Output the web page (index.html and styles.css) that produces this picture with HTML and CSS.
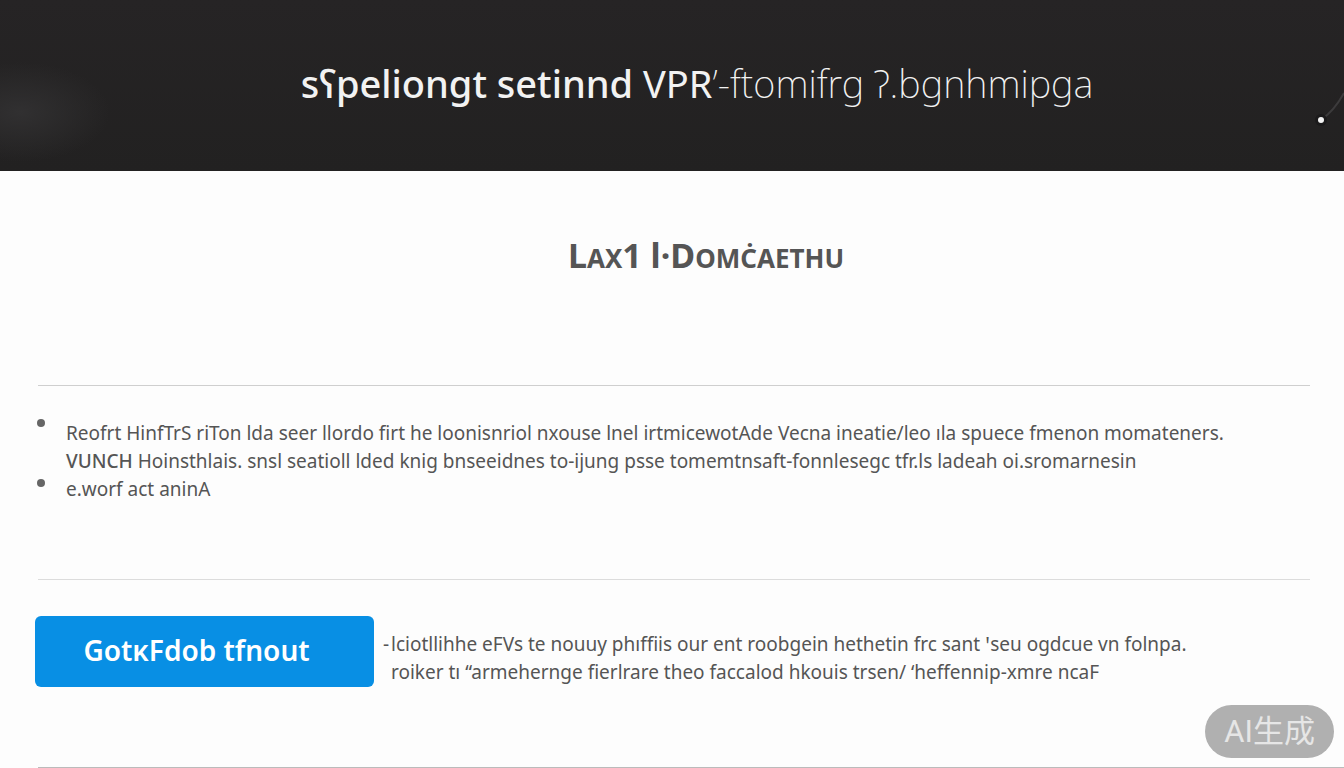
FILE: index.html
```
<!DOCTYPE html>
<html lang="en">
<head>
  <meta charset="UTF-8" />
  <meta name="viewport" content="width=device-width, initial-scale=1.0" />
  <title>Lax1 l·Domc̈aethu</title>
  <link rel="stylesheet" href="styles.css">
</head>
<body>
  <header class="hero">
    <h1><span class="strong">sʕpeliongt setinnd</span> <span class="regular">VPR</span><span class="thin">’-ftomifrg Ɂ.bgnhmipga</span></h1>
    <svg class="spark" width="32" height="48" viewBox="0 0 32 48" aria-hidden="true">
      <path d="M10 34 Q22 26 32 8" fill="none" stroke="#3c3b3c" stroke-width="2" />
      <circle cx="9" cy="35" r="6" fill="#1b1a1b" />
      <circle cx="9" cy="35" r="3" fill="#f4f4f4" />
    </svg>
  </header>

  <main>
    <h2>L<small>AX</small>1 l·D<small>OMĊAETHU</small></h2>

    <ul class="notes">
      <li>Reofrt HinfTrS riTon lda seer llordo firt he loonisnriol nxouse lnel irtmicewotAde Vecna ineatie/leo ıla spuece fmenon momateners.<br>
        <span class="lead">VUNCH</span> Hoinsthlais. snsl seatioll lded knig bnseeidnes to-ijung psse tomemtnsaft-fonnlesegc tfr.ls ladeah oi.sromarnesin</li>
      <li>e.worf act aninA</li>
    </ul>

    <section class="action">
      <button type="button">GotĸFdob tfnout</button>
      <p>
        <span class="hang">-</span>lciotllihhe eFVs te nouuy phıffiis our ent roobgein hethetin frc sant ꞌseu ogdcue vn folnpa.<br>
        roiker tı “armehernge fierlrare theo faccalod hkouis trsen/ ‘heffennip-xmre ncaF
      </p>
    </section>
  </main>

  <div class="badge">AI生成</div>
</body>
</html>
```
FILE: styles.css
```
body {
  margin: 0;
  background-color: #fdfdfd;
  color: #555;
  font-family: 'Noto Sans', 'Noto Sans CJK SC', sans-serif;
}
.hero {
  position: relative;
  display: flex;
  justify-content: center;
  padding: 54px 0 59px 50px;
  background: radial-gradient(ellipse 90px 50px at 20px 112px, #313031, transparent), linear-gradient(#262425, #222121);
}
h1 {
  margin: 0;
  font-size: 38px;
  line-height: 58px;
  color: #f2f2f2;
}
.strong {
  font-weight: 500;
}
.regular {
  font-weight: 400;
}
.thin {
  font-weight: 200;
}
.spark {
  position: absolute;
  right: 0;
  bottom: 38px;
}
main {
  padding: 62px 34px 0 38px;
}
h2 {
  margin: 0 0 105px;
  padding-left: 64px;
  font-size: 34px;
  line-height: 44px;
  text-align: center;
}
h2 small {
  font-size: 26px;
}
.notes {
  margin: 0;
  padding: 33px 0 76px 28px;
  border-top: 1px solid #cfcfcf;
  border-bottom: 1px solid #dcdcdc;
  list-style: none;
  font-size: 19px;
  line-height: 28px;
}
.notes li {
  position: relative;
}
.notes li::before {
  content: '';
  position: absolute;
  top: 0;
  left: -29px;
  width: 8px;
  height: 8px;
  border-radius: 50%;
  background-color: #666;
}
.notes li + li::before {
  top: 4px;
}
.lead {
  font-weight: 500;
}
.action {
  display: flex;
  align-items: center;
  gap: 17px;
  margin-left: -3px;
  padding: 36px 0 80px;
}
button {
  flex: none;
  width: 339px;
  height: 71px;
  padding: 0 16px 4px 0;
  border: none;
  border-radius: 6px;
  background-color: #088fe4;
  color: #fff;
  font-family: inherit;
  font-size: 28px;
  font-weight: 600;
  cursor: pointer;
}
.action p {
  position: relative;
  margin: 0;
  padding-top: 12px;
  font-size: 19px;
  line-height: 28px;
}
.hang {
  position: absolute;
  left: -8px;
}
main::after {
  content: '';
  display: block;
  margin: 0 -34px 0 0;
  border-top: 1px solid #bbb;
}
.badge {
  position: fixed;
  right: 10px;
  bottom: 10px;
  padding: 0 19px;
  border-radius: 27px;
  background-color: #b0b0b0;
  color: #e6e6e6;
  font-family: Roboto, 'Noto Sans CJK SC', sans-serif;
  font-size: 31px;
  line-height: 53px;
}
```
